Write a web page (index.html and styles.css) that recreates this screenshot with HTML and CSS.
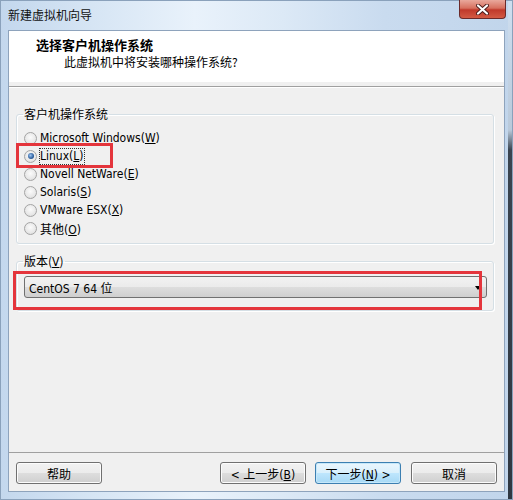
FILE: index.html
```html
<!DOCTYPE html>
<html lang="zh-CN">
<head>
  <meta charset="UTF-8" />
  <title>新建虚拟机向导</title>
  <link rel="stylesheet" href="styles.css">
</head>
<body>
  <div class="window">
    <div class="titlebar">
      <span class="title">新建虚拟机向导</span>
      <span class="close-btn">
        <svg width="13" height="11" viewBox="0 0 13 11">
          <path d="M2 1.5 L11 9.5 M11 1.5 L2 9.5" stroke="#4a1a1a" stroke-width="4" stroke-linecap="round"/>
          <path d="M2 1.5 L11 9.5 M11 1.5 L2 9.5" stroke="#fff" stroke-width="2.2" stroke-linecap="round"/>
        </svg>
      </span>
    </div>

    <div class="client">
      <div class="header">
        <div class="header-title">选择客户机操作系统</div>
        <div class="header-sub">此虚拟机中将安装哪种操作系统?</div>
      </div>
      <div class="header-rule"></div>

      <div class="body">
        <fieldset class="group">
          <legend>客户机操作系统</legend>
          <div class="radio-list">
            <div class="radio-row"><span class="radio"></span><span>Microsoft Windows(<u>W</u>)</span></div>
            <div class="radio-row marked"><span class="radio checked"></span><span class="focus">Linux(<u>L</u>)</span></div>
            <div class="radio-row"><span class="radio"></span><span>Novell NetWare(<u>E</u>)</span></div>
            <div class="radio-row"><span class="radio"></span><span>Solaris(<u>S</u>)</span></div>
            <div class="radio-row"><span class="radio"></span><span>VMware ESX(<u>X</u>)</span></div>
            <div class="radio-row"><span class="radio"></span><span>其他(<u>O</u>)</span></div>
          </div>
        </fieldset>

        <fieldset class="group version">
          <legend>版本(<u>V</u>)</legend>
          <div class="select-wrap">
            <div class="select">
              <span>CentOS 7 64 位</span>
              <span class="arrow"></span>
            </div>
          </div>
        </fieldset>
      </div>

      <div class="footer">
        <button class="btn">帮助</button>
        <button class="btn push">&lt; 上一步(<u>B</u>)</button>
        <button class="btn default">下一步(<u>N</u>) &gt;</button>
        <button class="btn cancel">取消</button>
      </div>
    </div>
  </div>
</body>
</html>
```

FILE: styles.css
```css
body {
  margin: 0;
  font-family: "DejaVu Sans Condensed", "Liberation Sans", "Noto Sans CJK SC", sans-serif;
  font-size: 12px;
  color: #000;
}
.window {
  width: 513px;
  height: 500px;
  box-sizing: border-box;
  padding: 0 8px 8px;
  display: flex;
  flex-direction: column;
  background:
    linear-gradient(to bottom, #cfdff0 0, #b9c9da 130px, #3a4450 150px, #2f3741 100%) right top / 5px 100% no-repeat,
    linear-gradient(to right, #c3d7ed 0%, #d6e5f4 18%, #e9f2fb 38%, #dce9f6 55%, #c9dbef 75%, #c1d5eb 100%);
  box-shadow: inset 0 0 0 1px #8aa1bb;
}
.titlebar {
  height: 30px;
  display: flex;
  justify-content: space-between;
  align-items: flex-start;
}
.title {
  font-family: "Noto Sans CJK SC", sans-serif;
  line-height: 14px;
  padding-top: 8px;
  color: #111;
}
.close-btn {
  width: 47px;
  height: 19px;
  margin-right: -1px;
  box-sizing: border-box;
  border: 1px solid #6b2a2a;
  border-top: none;
  border-radius: 0 0 4px 4px;
  background: linear-gradient(to bottom, #e9a89c 0%, #d7705f 45%, #c0392b 55%, #d35a44 100%);
  display: flex;
  align-items: center;
  justify-content: center;
}
.client {
  flex: 1;
  display: flex;
  flex-direction: column;
  background: #f0f0f0;
  border: 1px solid #8ea3bc;
}
.header {
  height: 51px;
  box-sizing: border-box;
  background: #fff;
  padding: 6px 0 0 27px;
  font-family: "Noto Sans CJK SC", sans-serif;
}
.header-title {
  font-size: 13px;
  font-weight: bold;
  line-height: 16px;
}
.header-sub {
  line-height: 16px;
  margin-top: 1px;
  padding-left: 28px;
}
.header-rule {
  margin-top: 4px;
  border-top: 1px solid #a0a0a0;
  border-bottom: 1px solid #fff;
}
.body {
  flex: 1;
  padding: 18px 10px 0 7px;
}
.group {
  margin: 0;
  padding: 7px 6px 6px 7px;
  border: 1px solid #d5dfe5;
  border-radius: 3px;
  box-shadow: inset 1px 1px 0 #fff, 1px 1px 0 #fff;
}
.group legend {
  padding: 0 1px;
  margin-left: -1px;
  line-height: 16px;
  font-family: "Noto Sans CJK SC", sans-serif;
}
.group legend u {
  font-family: "DejaVu Sans Condensed", "Liberation Sans", sans-serif;
}
.radio-list {
  display: flex;
  flex-direction: column;
}
.radio-row {
  position: relative;
  height: 18px;
  display: flex;
  align-items: center;
  gap: 3px;
}
.radio {
  width: 13px;
  height: 13px;
  box-sizing: border-box;
  border-radius: 50%;
  border: 1px solid #a4a4a4;
  background: radial-gradient(circle at 50% 40%, #fbfbfb 0%, #e8e8e8 60%, #d4d4d4 100%);
  display: flex;
  align-items: center;
  justify-content: center;
}
.radio.checked::after {
  content: "";
  width: 6px;
  height: 6px;
  border-radius: 50%;
  background: radial-gradient(circle at 40% 40%, #9bc4f2 0%, #2d5f9e 60%, #173a6b 100%);
}
.focus {
  outline: 1px dotted #333;
  outline-offset: 0;
  line-height: 15px;
}
.radio-row.marked::before {
  content: "";
  position: absolute;
  left: -8px;
  top: -4px;
  width: 97px;
  height: 25px;
  box-sizing: border-box;
  border: 3px solid #e4353c;
}
.version {
  margin-top: 9px;
  padding: 6px 6px 12px 7px;
}
.select-wrap {
  position: relative;
}
.select-wrap::before {
  content: "";
  position: absolute;
  left: -11px;
  top: -5px;
  width: 469px;
  height: 39px;
  box-sizing: border-box;
  border: 3px solid #e4353c;
}
.select {
  height: 22px;
  box-sizing: border-box;
  border: 1px solid #707070;
  border-radius: 3px;
  background: linear-gradient(to bottom, #f2f2f2 0%, #ebebeb 50%, #dddddd 51%, #cfcfcf 100%);
  display: flex;
  align-items: center;
  justify-content: space-between;
  padding: 0 5px 0 4px;
  font-family: "DejaVu Sans Condensed", "Liberation Sans", "Noto Sans CJK SC", sans-serif;
}
.arrow {
  width: 0;
  height: 0;
  border-left: 3px solid transparent;
  border-right: 3px solid transparent;
  border-top: 4px solid #000;
  margin-top: 1px;
}
.footer {
  border-top: 1px solid #a0a0a0;
  padding: 9px 7px 7px;
  display: flex;
  gap: 9px;
}
.btn {
  width: 86px;
  height: 22px;
  box-sizing: border-box;
  border: 1px solid #707070;
  border-radius: 3px;
  background: linear-gradient(to bottom, #f2f2f2 0%, #ebebeb 50%, #dddddd 51%, #cfcfcf 100%);
  box-shadow: inset 0 0 0 1px #fcfcfc;
  font-family: "DejaVu Sans Condensed", "Liberation Sans", "Noto Sans CJK SC", sans-serif;
  font-size: 12px;
  padding: 0;
  color: #000;
}
.btn.push {
  margin-left: auto;
}
.btn.default {
  border-color: #3c7fb1;
  background: linear-gradient(to bottom, #eaf6fd 0%, #d9f0fc 50%, #bee6fd 51%, #a7d9f5 100%);
  box-shadow: inset 0 0 0 1px #c6e8fa;
}
.btn.cancel {
  margin-left: 1px;
}
```
